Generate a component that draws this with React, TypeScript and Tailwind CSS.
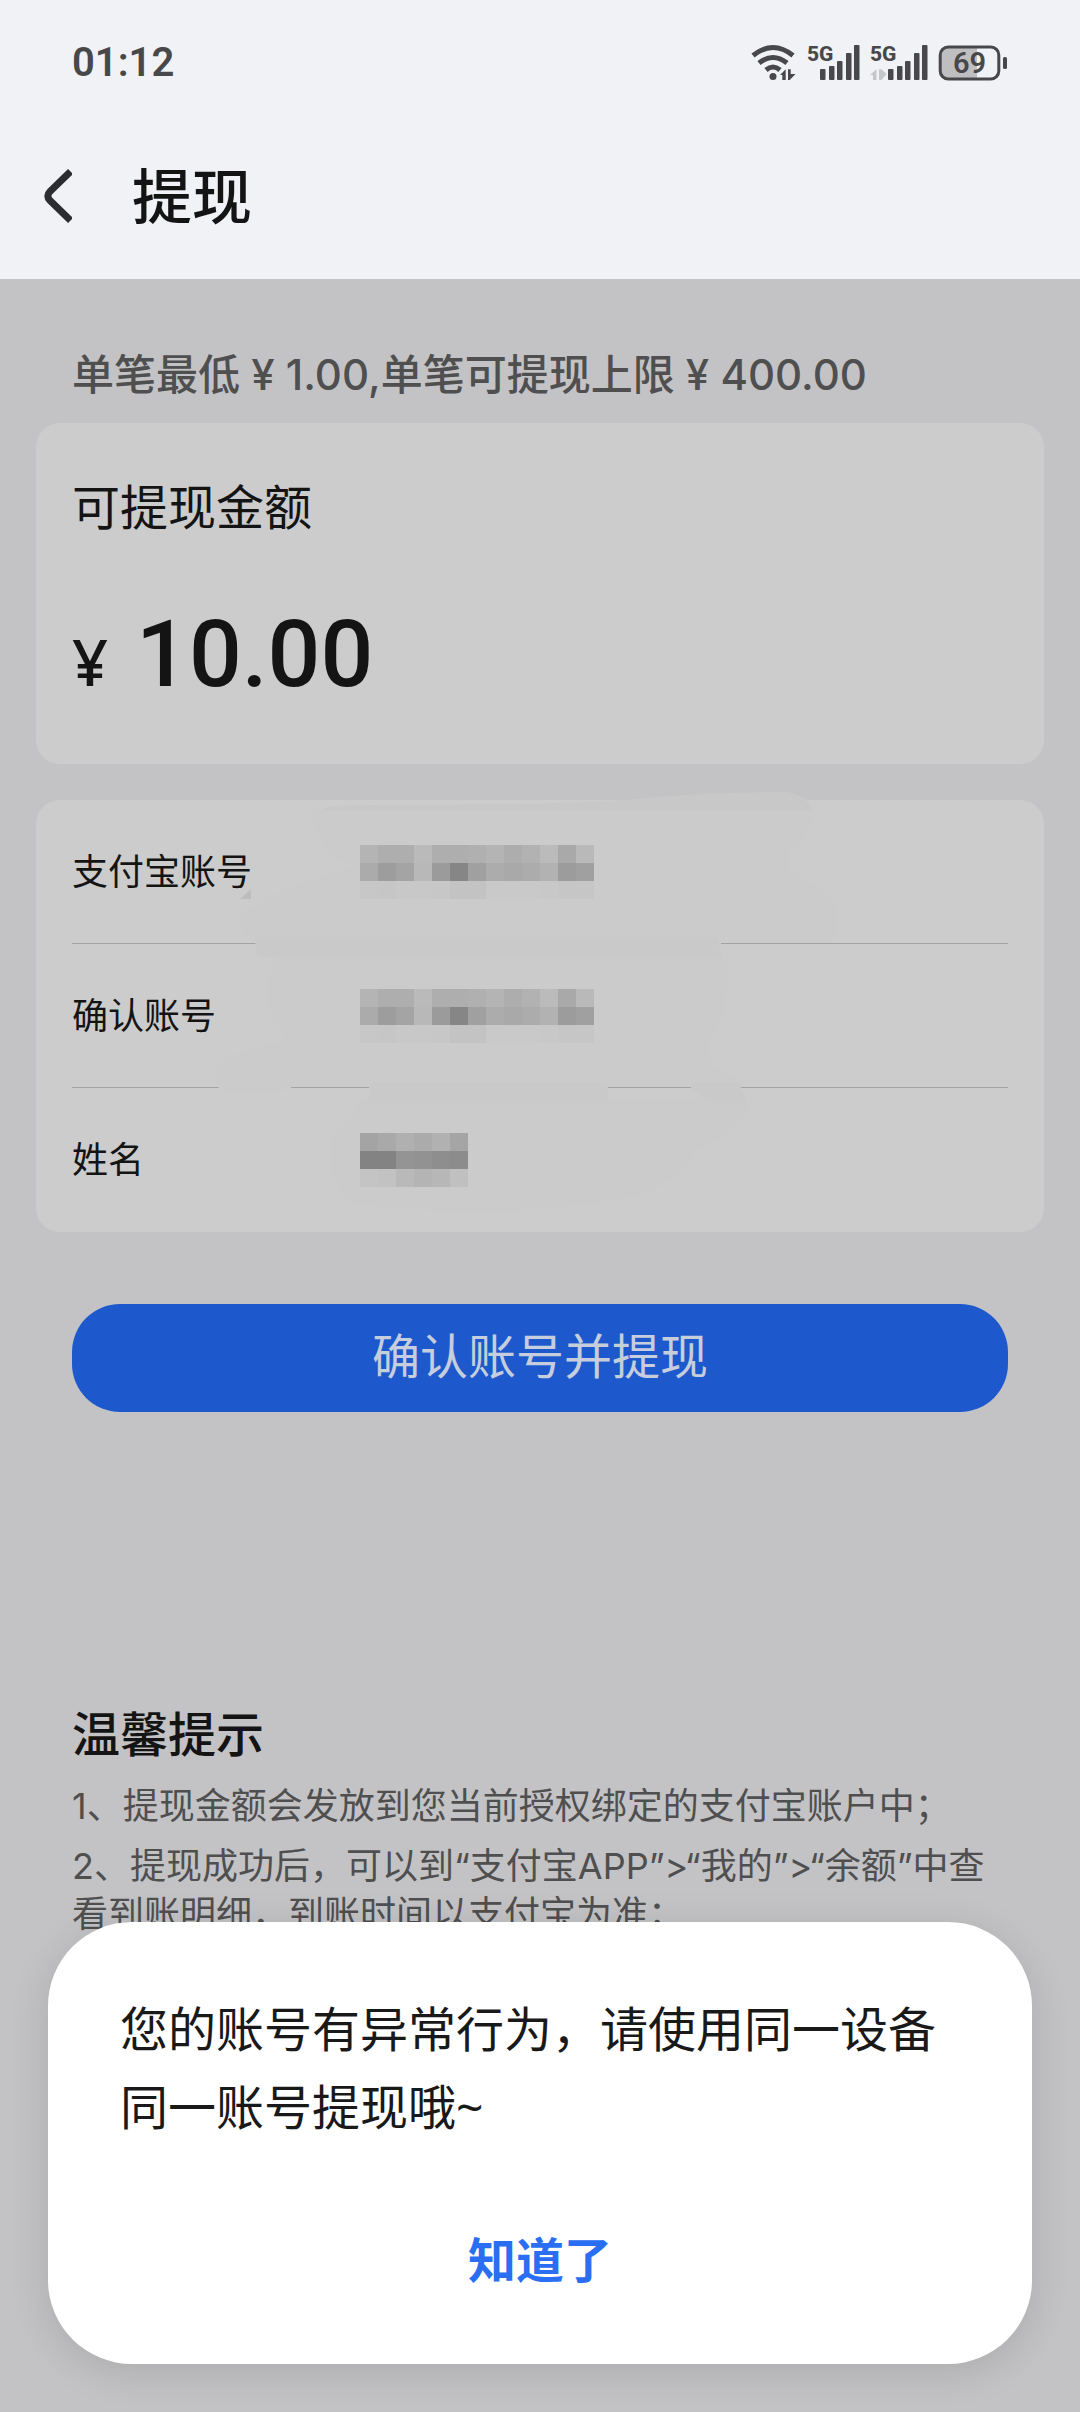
const SIGNAL_BARS = [
  { x: 0, top: 25 },
  { x: 9, top: 22 },
  { x: 17, top: 17 },
  { x: 26, top: 9 },
  { x: 34, top: 1 },
];

const ACCOUNT_PIXELS = [
  ['#b4b4b4', '#aeaeae', '#aeaeae', '#bababa', '#aeaeae', '#aeaeae', '#b0b0b0', '#b4b4b4', '#adadad', '#b2b2b2', '#bbbbbb', '#a9a9a9', '#b9b9b9'],
  ['#ababab', '#9d9d9d', '#a4a4a4', '#b8b8b8', '#9b9b9b', '#868686', '#a0a0a0', '#acacac', '#a9a9a9', '#acacac', '#b2b2b2', '#9c9c9c', '#a0a0a0'],
  ['#c7c7c7', '#c6c6c6', '#c8c8c8', '#c8c8c8', '#c7c7c7', '#c3c3c3', '#c3c3c3', '#c9c9c9', '#c9c9c9', '#c9c9c9', '#c8c8c8', '#c6c6c6', '#c6c6c6'],
];

const NAME_PIXELS = [
  ['#a4a4a4', '#a9a9a9', '#b0b0b0', '#ababab', '#b1b1b1', '#a5a5a5'],
  ['#838383', '#838383', '#949494', '#929292', '#8e8e8e', '#8c8c8c'],
  ['#c4c4c4', '#c2c2c2', '#b9b9b9', '#b4b4b4', '#b7b7b7', '#c0c0c0'],
];

const FIELDS = [
  { label: '支付宝账号', pixels: ACCOUNT_PIXELS },
  { label: '确认账号', pixels: ACCOUNT_PIXELS },
  { label: '姓名', pixels: NAME_PIXELS },
];

const TIPS = [
  '1、提现金额会发放到您当前授权绑定的支付宝账户中；',
  '2、提现成功后，可以到“支付宝APP”>“我的”>“余额”中查看到账明细，到账时间以支付宝为准；',
];

export default function App() {
  return (
    <div className="relative flex min-h-screen flex-col bg-[#c3c3c5] font-['Noto_Sans','Noto_Sans_CJK_SC',sans-serif] text-[#141414]">
      {/* Header */}
      <header className="bg-[#f1f2f6]">
        <div className="flex h-[112px] items-center justify-between px-[72px] pt-[14px] text-[#48484a]">
          <span className="font-[Roboto,sans-serif] text-[40px] leading-[44px] font-semibold">01:12</span>
          <div className="flex items-center gap-[10px]">
            <WifiIcon />
            <SignalIcon />
            <SignalIcon idle />
            <BatteryIcon />
          </div>
        </div>
        <div className="flex h-[167px] items-center gap-[60px] pl-[40px]">
          <button type="button" aria-label="返回" className="text-[#2c2d30]">
            <svg width="32" height="56" viewBox="0 0 32 56" fill="none" stroke="currentColor" strokeWidth="7">
              <path d="M30.500 3.500L10 23.500Q5.500 28 10 32.500L30.500 52.500" />
            </svg>
          </button>
          <h1 className="text-[60px] leading-[72px] font-medium">提现</h1>
        </div>
      </header>

      <main className="flex flex-col px-[36px] pt-[66px]">
        <p className="px-[36px] font-[Inter,'Noto_Sans_CJK_SC',sans-serif] text-[42px] leading-[60px] font-medium text-[#4f4f50]">
          单笔最低 ¥ 1.00,单笔可提现上限 ¥ 400.00
        </p>

        {/* Balance */}
        <section className="mt-[18px] rounded-3xl bg-[#cccccc] px-[36px] py-[48px]">
          <h2 className="text-[48px] leading-[72px]">可提现金额</h2>
          <p className="mt-[58px] flex items-baseline gap-[28px] leading-[108px] font-medium">
            <span className="text-[63px]">¥</span>
            <span className="font-[Roboto,sans-serif] text-[93px]">10.00</span>
          </p>
        </section>

        {/* Account */}
        <section className="relative mt-[36px] rounded-3xl bg-[#cccccc] px-[36px]">
          <dl>
            {FIELDS.map((field) => (
              <div key={field.label} className="flex h-[144px] items-center border-b border-[#a3a3a3] last:border-0">
                <dt className="w-[288px] text-[36px] leading-[48px]">{field.label}</dt>
                <dd className="relative z-10">
                  <Mosaic pixels={field.pixels} />
                </dd>
              </div>
            ))}
          </dl>
          <Smudges />
        </section>

        <button type="button" className="mx-[36px] mt-[72px] h-[108px] rounded-[48px] bg-[#1d59cc] pb-[4px] text-[48px] leading-[72px] text-[#c6cddd]">
          确认账号并提现
        </button>

        {/* Tips */}
        <section className="mt-[286px] px-[36px]">
          <h2 className="text-[48px] leading-[72px] font-medium">温馨提示</h2>
          <div className="mt-[12px] space-y-[12px] pr-[20px] font-[Inter,'Noto_Sans_CJK_SC',sans-serif] text-[36px] leading-[48px] text-[#4f4f50]">
            {TIPS.map((tip) => (
              <p key={tip}>{tip}</p>
            ))}
          </div>
        </section>
      </main>

      {/* Dialog */}
      <div
        role="dialog"
        aria-modal="true"
        className="absolute inset-x-[48px] bottom-[48px] rounded-[84px] bg-white px-[72px] pt-[68px] pb-[32px] shadow-[0_8px_40px_rgba(0,0,0,0.12)]"
      >
        <p className="text-[48px] leading-[78px] text-[#191919]">您的账号有异常行为，请使用同一设备同一账号提现哦~</p>
        <button type="button" className="mt-[42px] h-[144px] w-full text-[48px] leading-[72px] font-bold text-[#2a6ef3]">
          知道了
        </button>
      </div>
    </div>
  );
}

function Mosaic({ pixels }: { pixels: string[][] }) {
  return (
    <svg width={pixels[0].length * 18} height={pixels.length * 18} shapeRendering="crispEdges" className="block">
      {pixels.map((row, y) =>
        row.map((fill, x) => <rect key={`${x}-${y}`} x={x * 18} y={y * 18} width="18" height="18" fill={fill} />)
      )}
    </svg>
  );
}

// brush strokes over the account card, they also wipe parts of the dividers
function Smudges() {
  return (
    <svg
      width="1008"
      height="448"
      viewBox="0 -16 1008 448"
      fill="#cbcbcb"
      className="pointer-events-none absolute -top-[16px] left-0"
    >
      <path fill="#c8c8c8" d="M288 9Q282 4 400 5Q560 4 620 -3Q680 -8 750 -8Q770 -6 776 10L288 10Z" />
      <path d="M276 10H776Q778 30 760 44Q740 60 762 78Q798 92 800 112V141H685V157H220V143L206 130Q200 116 214 108Q250 84 324 66Q280 56 276 10Z" />
      <path fill="#c9c9c9" d="M220 137H680L686 157H224Q218 150 220 137Z" />
      <path d="M240 157H690Q694 200 680 230Q660 250 680 268Q702 276 708 285H572V289H333V285H255V289Q220 296 184 290Q168 266 200 254L250 240Q220 200 240 157Z" />
      <path fill="#c9c9c9" d="M334 282H560L572 288V301H332Z" />
      <path fill="#c9c9c9" d="M655 282H702L712 301H672L655 289Z" />
      <path d="M326 301H712Q710 330 660 350Q640 390 580 400Q450 420 320 404Q290 380 296 340Z" />
      <path fill="#bdbdbd" d="M204 99L215 89V99Z" />
    </svg>
  );
}

function WifiIcon() {
  return (
    <svg width="46" height="38" viewBox="0 0 46 38" fill="currentColor">
      <g fill="none" stroke="currentColor" strokeWidth="5">
        <path d="M2 11.500Q22 -4.500 42 11.500" />
        <path d="M8 19Q22 8 36 19" />
        <path d="M15 26Q22 20 29 26" />
      </g>
      <circle cx="22" cy="32.500" r="3.500" />
      <path d="M29 31L34.700 25.300V36H31.300V31Z" />
      <path d="M37 25.300H39.700V30H44.500L38.700 36H37Z" />
    </svg>
  );
}

function SignalIcon({ idle = false }: { idle?: boolean }) {
  const left = idle ? 18 : 13;
  return (
    <svg width={left + 40} height="38" viewBox={`0 0 ${left + 40} 38`} fill="currentColor" className="overflow-visible">
      <text x="0" y="17" className="font-[Roboto] text-[21px] font-extrabold">5G</text>
      {SIGNAL_BARS.map((bar) => (
        <rect key={bar.x} x={left + bar.x} y={bar.top} width="5.500" height={36 - bar.top} rx="1" />
      ))}
      {idle && (
        <g fill="#c6c6c9">
          <path d="M0 31L6.500 25.300V36H3V31Z" />
          <path d="M9 25.300H11.500L16.500 30L11.500 36H9Z" />
        </g>
      )}
    </svg>
  );
}

function BatteryIcon() {
  return (
    <svg width="70" height="38" viewBox="0 0 70 38" fill="currentColor" className="overflow-visible">
      <path fill="#bfbfc2" d="M10 3H39V35H10Q3 35 3 28V10Q3 3 10 3Z" />
      <rect x="2.200" y="3" width="58.600" height="32" rx="8" fill="none" stroke="currentColor" strokeWidth="3" />
      <rect x="65" y="13" width="4" height="12" rx="1.500" />
      <text x="31.500" y="29" textAnchor="middle" className="font-[Roboto] text-[29px] font-semibold">69</text>
    </svg>
  );
}
